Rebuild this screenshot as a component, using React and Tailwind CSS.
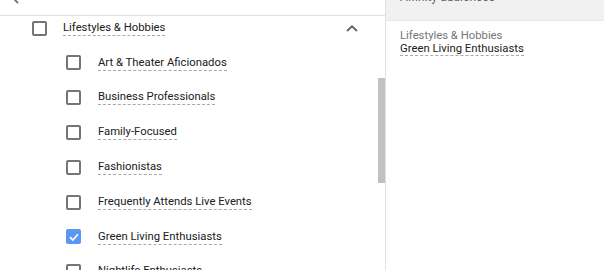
import React from "react";

const items = [
  { label: "Art & Theater Aficionados" },
  { label: "Business Professionals" },
  { label: "Family-Focused" },
  { label: "Fashionistas" },
  { label: "Frequently Attends Live Events" },
  { label: "Green Living Enthusiasts", checked: true },
  { label: "Nightlife Enthusiasts" },
];

function Box({ checked }) {
  if (checked) {
    return (
      <div className="w-[15px] h-[15px] shrink-0 rounded-[2px] bg-[#5b96f5] flex items-center justify-center">
        <svg width="12" height="12" viewBox="0 0 12 12">
          <polyline points="2,6.2 4.8,9 10,3.2" fill="none" stroke="#ffffff" strokeWidth="1.7" />
        </svg>
      </div>
    );
  }
  return <div className="w-[15px] h-[15px] shrink-0 rounded-[2px] border-2 border-[#757575] bg-white" />;
}

function Dashed({ children }) {
  return (
    <span className="inline-block leading-[14px] border-b border-dashed border-[#a8a8a8] whitespace-nowrap">
      {children}
    </span>
  );
}

export default function App() {
  return (
    <div
      className="flex w-[604px] h-[270px] overflow-hidden bg-white text-[#202020]"
      style={{ fontFamily: "Roboto, 'Liberation Sans', sans-serif", fontSize: "11.3px" }}
    >
      {/* Left panel */}
      <div className="w-[386px] shrink-0 flex flex-col border-r border-[#e0e0e0]">
        <div className="relative h-[16px] shrink-0 border-b border-[#e0e0e0] overflow-hidden">
          <svg className="absolute left-[11px] top-[-8px]" width="9" height="12" viewBox="0 0 9 12">
            <polyline points="7,1 2,6 7,11" fill="none" stroke="#757575" strokeWidth="1.8" />
          </svg>
        </div>
        <div className="flex flex-1 min-h-0">
          <div className="flex-1 min-w-0 overflow-hidden">
            <div className="h-[22px] mt-[1px] flex items-center pl-[32px] pr-[20px]">
              <Box />
              <div className="ml-[16px] flex-1">
                <Dashed>Lifestyles &amp; Hobbies</Dashed>
              </div>
              <svg width="12" height="7" viewBox="0 0 12 7">
                <polyline points="1,6 6,1.3 11,6" fill="none" stroke="#616161" strokeWidth="1.8" />
              </svg>
            </div>
            <div className="pt-[6.6px]">
              {items.map((it) => (
                <div key={it.label} className="h-[34.8px] flex items-center pl-[66px]">
                  <Box checked={it.checked} />
                  <div className="ml-[17px]">
                    <Dashed>{it.label}</Dashed>
                  </div>
                </div>
              ))}
            </div>
          </div>
          <div className="w-[7px] shrink-0">
            <div className="mt-[62px] h-[105px] bg-[#c1c1c1]" />
          </div>
        </div>
      </div>

      {/* Right panel */}
      <div className="flex-1 flex flex-col">
        <div className="h-[21px] shrink-0 bg-[#f1f1f1] border-b border-[#e6e6e6] overflow-hidden pl-[14px]">
          <div className="mt-[-9px] leading-[12px] text-[12px] text-[#5f6368]">Affinity audiences</div>
        </div>
        <div className="pl-[14px] pt-[8px]">
          <div className="leading-[13px] text-[#757575]">Lifestyles &amp; Hobbies</div>
          <div className="leading-[13px]">
            <span className="inline-block leading-[13px] border-b border-dashed border-[#a8a8a8]">
              Green Living Enthusiasts
            </span>
          </div>
        </div>
      </div>
    </div>
  );
}
